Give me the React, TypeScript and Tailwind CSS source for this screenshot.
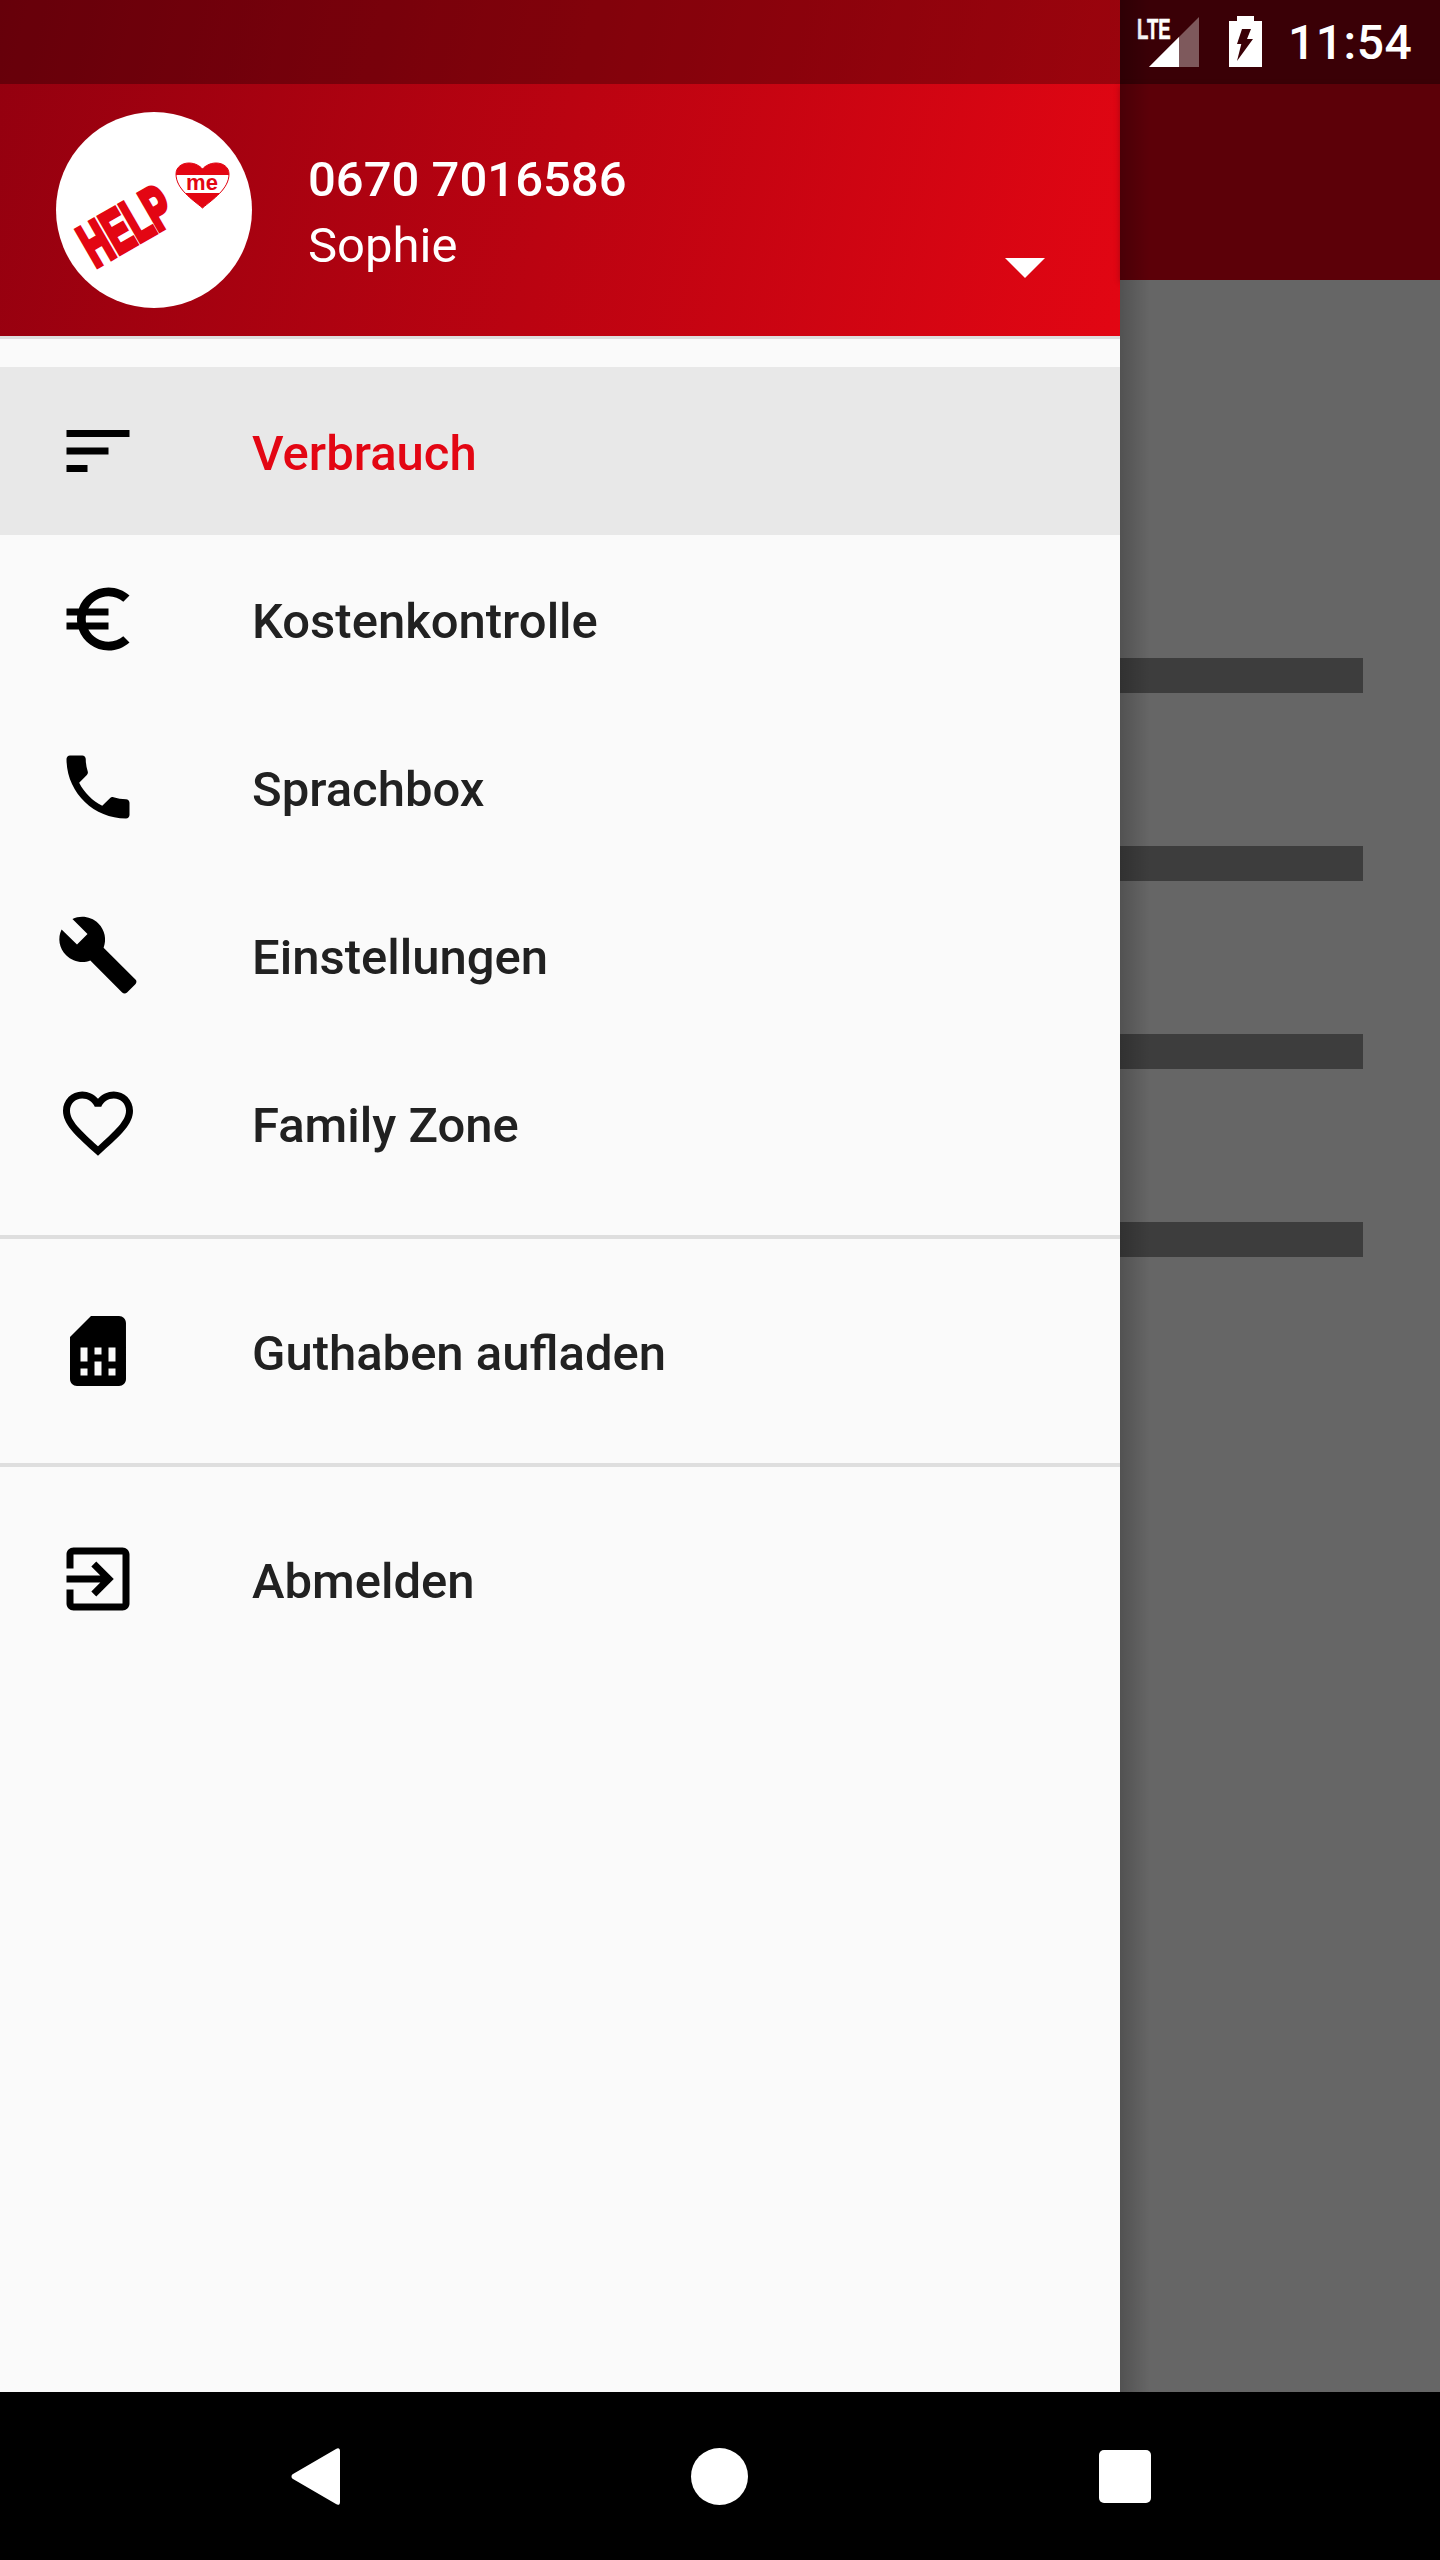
const menuPaths = {
  sort: 'M3 18h6v-2H3v2zM3 6v2h18V6H3zm0 7h12v-2H3v2z',
  euro: 'M15 18.5c-2.51 0-4.68-1.42-5.76-3.5H15v-2H8.58c-.05-.33-.08-.66-.08-1s.03-.67.08-1H15V9H9.24C10.32 6.92 12.5 5.5 15 5.5c1.61 0 3.09.59 4.23 1.57L21 5.3C19.41 3.87 17.3 3 15 3c-3.92 0-7.24 2.51-8.48 6H3v2h3.06c-.04.33-.06.66-.06 1 0 .34.02.67.06 1H3v2h3.52c1.24 3.49 4.56 6 8.48 6 2.31 0 4.41-.87 6-2.3l-1.78-1.77c-1.13.98-2.6 1.57-4.22 1.57z',
  phone: 'M6.62 10.79c1.44 2.83 3.76 5.14 6.59 6.59l2.2-2.2c.27-.27.67-.36 1.02-.24 1.12.37 2.33.57 3.57.57.55 0 1 .45 1 1V20c0 .55-.45 1-1 1-9.39 0-17-7.61-17-17 0-.55.45-1 1-1h3.5c.55 0 1 .45 1 1 0 1.25.2 2.45.57 3.57.11.35.03.74-.25 1.02l-2.2 2.2z',
  build: 'M22.7 19l-9.1-9.1c.9-2.3.4-5-1.5-6.9-2-2-5-2.4-7.4-1.3L9 6 6 9 1.6 4.7C.4 7.1.9 10.1 2.9 12.1c1.9 1.9 4.6 2.4 6.9 1.5l9.1 9.1c.4.4 1 .4 1.4 0l2.3-2.3c.5-.4.5-1.1.1-1.4z',
  heart: 'M16.5 3c-1.74 0-3.41.81-4.5 2.09C10.91 3.81 9.24 3 7.5 3 4.42 3 2 5.42 2 8.5c0 3.78 3.4 6.86 8.55 11.54L12 21.35l1.45-1.32C18.6 15.36 22 12.28 22 8.5 22 5.42 19.58 3 16.5 3zm-4.4 15.55l-.1.1-.1-.1C7.14 14.24 4 11.39 4 8.5 4 6.5 5.5 5 7.5 5c1.54 0 3.04.99 3.57 2.36h1.87C13.46 5.99 14.96 5 16.5 5c2 0 3.5 1.5 3.5 3.5 0 2.89-3.14 5.74-7.9 10.05z',
  sim: 'M19.99 4c0-1.1-.89-2-1.99-2h-8L4 8v12c0 1.1.9 2 2 2h12c1.1 0 2-.9 2-2l-.01-16zM9 19H7v-2h2v2zm8 0h-2v-2h2v2zm-8-4H7v-4h2v4zm4 4h-2v-4h2v4zm0-6h-2v-2h2v2zm4 2h-2v-4h2v4z',
  exit: 'M10.09 15.59L11.5 17l5-5-5-5-1.41 1.41L12.67 11H3v2h9.67l-2.58 2.59zM19 3H5c-1.11 0-2 .9-2 2v4h2V5h14v14H5v-4H3v4c0 1.1.89 2 2 2h14c1.1 0 2-.9 2-2V5c0-1.1-.9-2-2-2z',
};

const HEART = 'M146.500 96 C136 87 120 77 120 62 C120 55 126 51 133 51 C139 51 144 54 146.500 57 C149 54 154 51 160 51 C167 51 173 55 173 62 C173 77 157 87 146.500 96 Z';

const MenuRow = ({ icon, label, active }: { icon: string; label: string; active?: boolean }) => (
  <div className={`flex h-[168px] items-center ${active ? 'bg-[#e8e8e8]' : ''}`}>
    <svg viewBox="0 0 24 24" className="ml-[56px] h-[84px] w-[84px] fill-black">
      <path d={icon} />
    </svg>
    <span className={`mt-[5px] ml-[112px] text-[49px] font-medium ${active ? 'text-[#e30613]' : 'text-[#212121]'}`}>{label}</span>
  </div>
);

const Logo = () => (
  <svg viewBox="0 0 196 196" className="h-[196px] w-[196px] shrink-0">
    <defs>
      <clipPath id="heart-clip">
        <path d={HEART} />
      </clipPath>
    </defs>
    <circle cx="98" cy="98" r="98" fill="#fff" />
    <text
      transform="translate(39 156) rotate(-30) scale(.59 1)"
      fontFamily="'Liberation Sans', sans-serif"
      fontWeight="700"
      fontSize="61"
      fill="#e30613"
      stroke="#e30613"
      strokeWidth="4"
      style={{ vectorEffect: 'non-scaling-stroke' }}
    >
      HELP
    </text>
    <path d={HEART} fill="#e30613" />
    <rect x="118" y="63" width="58" height="18" fill="#fff" clipPath="url(#heart-clip)" />
    <path d={HEART} fill="none" stroke="#e30613" strokeWidth="1" />
    <text x="146" y="78" textAnchor="middle" fontFamily="'Liberation Sans', sans-serif" fontWeight="700" fontSize="22" fill="#e30613">
      me
    </text>
  </svg>
);

const StatusIcons = () => (
  <div className="flex h-[84px] items-start text-white">
    <span className="mt-[14px] ml-[17px] w-[31px] origin-left scale-x-[.64] font-['Liberation_Sans',sans-serif] text-[29px] leading-[30px] font-bold whitespace-nowrap [-webkit-text-stroke:0.6px_white]">
      LTE
    </span>
    <svg viewBox="0 0 50 50" className="mt-[17px] ml-[-19px] h-[50px] w-[50px]">
      <path d="M50 0V50H0Z" fill="#fff" fillOpacity=".35" />
      <path d="M30 20V50H0Z" fill="#fff" />
    </svg>
    <svg viewBox="0 0 33 51" className="mt-[16px] ml-[30px] h-[51px] w-[33px]">
      <path
        fillRule="evenodd"
        fill="#fff"
        d="M8 0H25V5H33V51H0V5H8ZM13 13H22L18 23H24L8 45L12.300 28H8Z"
      />
    </svg>
    <span className="mt-[15px] ml-[26px] text-[48px] leading-[56px] font-medium tracking-[.5px]">11:54</span>
  </div>
);

export default function App() {
  return (
    <div className="flex h-[2560px] w-[1440px] flex-col overflow-hidden bg-black font-['Roboto',sans-serif]">
      <div className="flex min-h-0 flex-1">
        <div className="flex w-[1120px] flex-col bg-[#fafafa]">
          <div className="bg-[linear-gradient(104deg,#93000f,#e20613)]">
            <div className="h-[84px] bg-black/30" />
            <div className="relative flex h-[252px] items-center pl-[56px] text-white">
              <Logo />
              <div className="mt-[6px] ml-[56px] flex flex-col">
                <span className="text-[49px] leading-[66px] font-medium">0670 7016586</span>
                <span className="text-[49px] leading-[66px]">Sophie</span>
              </div>
              <svg viewBox="0 0 40 20" className="absolute top-[174px] left-[1005px] h-[20px] w-[40px] fill-white">
                <path d="M0 0H40L20 20Z" />
              </svg>
            </div>
          </div>
          <div className="h-[3px] bg-[#dedede]" />

          <div className="py-[28px]">
            <MenuRow icon={menuPaths.sort} label="Verbrauch" active />
            <MenuRow icon={menuPaths.euro} label="Kostenkontrolle" />
            <MenuRow icon={menuPaths.phone} label="Sprachbox" />
            <MenuRow icon={menuPaths.build} label="Einstellungen" />
            <MenuRow icon={menuPaths.heart} label="Family Zone" />
          </div>
          <div className="h-[4px] bg-[#dedede]" />
          <div className="py-[28px]">
            <MenuRow icon={menuPaths.sim} label="Guthaben aufladen" />
          </div>
          <div className="h-[4px] bg-[#dedede]" />
          <div className="py-[28px]">
            <MenuRow icon={menuPaths.exit} label="Abmelden" />
          </div>
        </div>

        <div className="relative flex flex-1 flex-col">
          <div className="bg-[#3a0006]">
            <StatusIcons />
          </div>
          <div className="h-[196px] bg-[#5c0008] shadow-[0_2px_6px_rgba(0,0,0,.25)]" />
          <div className="flex flex-1 flex-col gap-[153px] bg-[#666666] pt-[378px]">
            <div className="h-[35px] w-[243px] bg-[#3d3d3d]" />
            <div className="h-[35px] w-[243px] bg-[#3d3d3d]" />
            <div className="h-[35px] w-[243px] bg-[#3d3d3d]" />
            <div className="h-[35px] w-[243px] bg-[#3d3d3d]" />
          </div>
          <div className="absolute inset-y-0 left-0 w-[30px] bg-gradient-to-r from-black/20 to-transparent" />
        </div>
      </div>

      <div className="flex h-[168px] items-center bg-black">
        <svg viewBox="0 0 49 57" className="ml-[291px] h-[57px] w-[49px] fill-white">
          <path d="M49 3V54C49 57 47 57.500 45 56L2 31C0 30 0 27 2 26L45 1C47 -.5 49 0 49 3Z" />
        </svg>
        <div className="ml-[351px] h-[57px] w-[57px] rounded-full bg-white" />
        <div className="ml-[351px] h-[53px] w-[52px] rounded-[5px] bg-white" />
      </div>
    </div>
  );
}
